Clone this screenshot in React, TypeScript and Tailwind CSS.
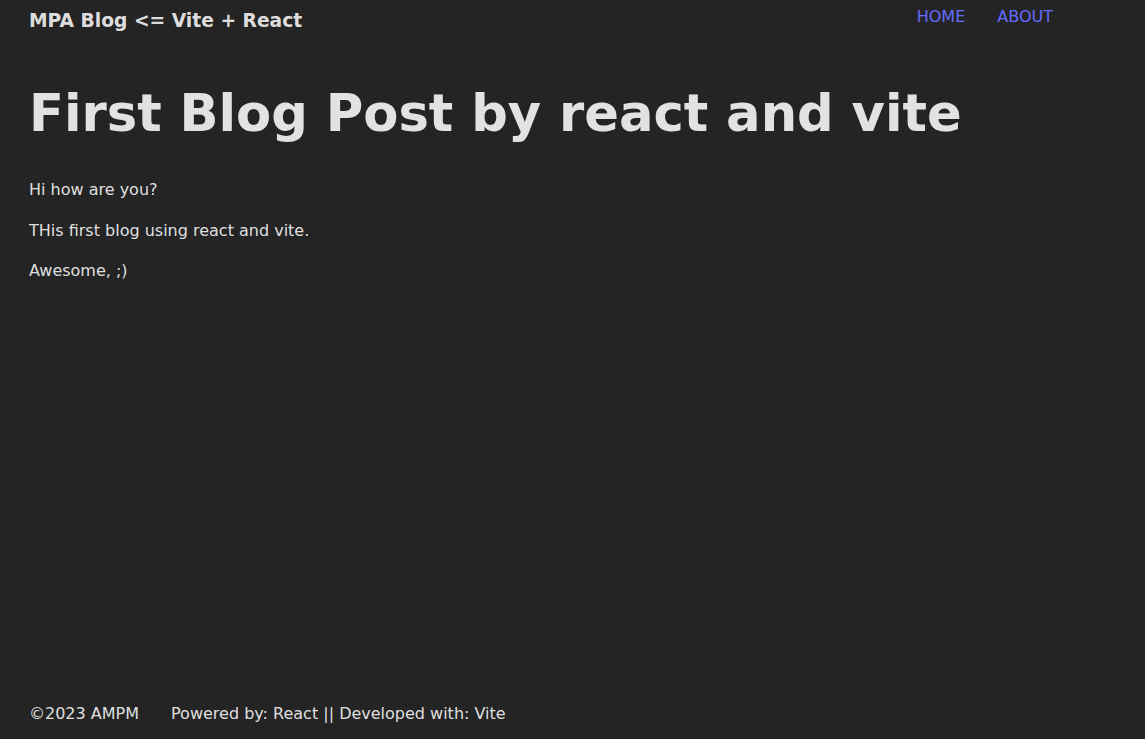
export default function App() {
  return (
    <div
      className="min-h-screen flex flex-col bg-[#242424] text-[rgba(255,255,255,0.87)] text-base leading-6"
      style={{ fontFamily: '"DejaVu Sans", sans-serif' }}
    >
      <header className="flex items-start justify-between pl-[29px] pr-[92px]">
        <div className="text-[18.7px] font-bold leading-6 pt-[9px]">MPA Blog &lt;= Vite + React</div>
        <nav className="flex gap-8 pt-[5px] text-[#646cff]">
          <a href="#">HOME</a>
          <a href="#">ABOUT</a>
        </nav>
      </header>
      <main className="flex-1 px-[29px]">
        <h1 className="text-[51.2px] font-bold leading-[1.1] mt-[52px] mb-[37px]">First Blog Post by react and vite</h1>
        <p className="mb-[17px]">Hi how are you?</p>
        <p className="mb-4">THis first blog using react and vite.</p>
        <p className="mb-4">Awesome, ;)</p>
      </main>
      <footer className="flex gap-8 px-[29px] pb-[13px]">
        <span>©2023 AMPM</span>
        <span>Powered by: React || Developed with: Vite</span>
      </footer>
    </div>
  );
}
